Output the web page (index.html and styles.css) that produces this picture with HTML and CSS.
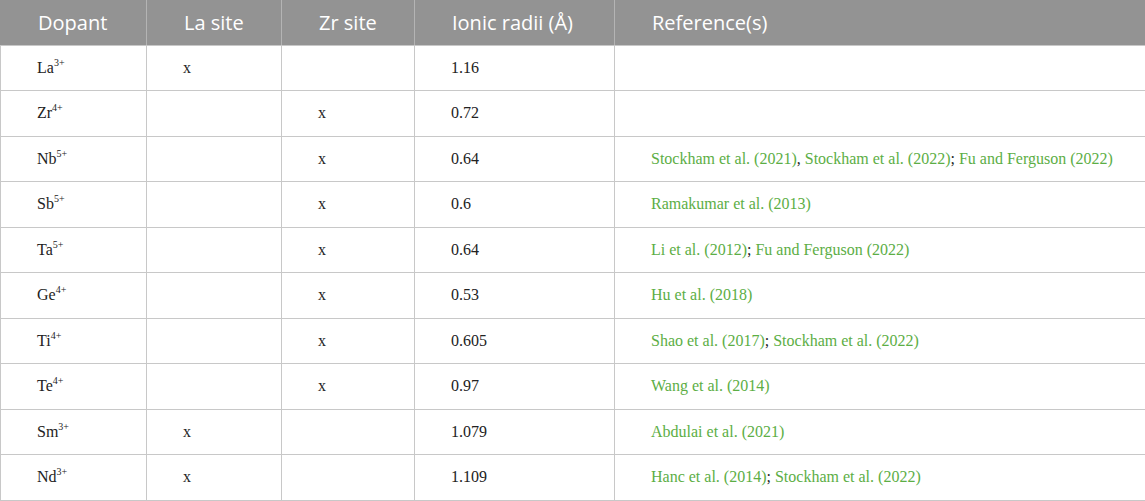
FILE: index.html
```html
<!DOCTYPE html>
<html>
<head>
<meta charset="utf-8">
<link rel="stylesheet" href="styles.css">
</head>
<body>
<table class="tbl">
  <colgroup>
    <col class="c1"><col class="c2"><col class="c3"><col class="c4"><col class="c5">
  </colgroup>
  <thead>
    <tr><th>Dopant</th><th>La site</th><th>Zr site</th><th>Ionic radii (Å)</th><th>Reference(s)</th></tr>
  </thead>
  <tbody>
    <tr><td>La<sup>3+</sup></td><td>x</td><td></td><td>1.16</td><td></td></tr>
    <tr><td>Zr<sup>4+</sup></td><td></td><td>x</td><td>0.72</td><td></td></tr>
    <tr><td>Nb<sup>5+</sup></td><td></td><td>x</td><td>0.64</td><td><span class="ref">Stockham et al. (2021)</span>, <span class="ref">Stockham et al. (2022)</span>; <span class="ref">Fu and Ferguson (2022)</span></td></tr>
    <tr><td>Sb<sup>5+</sup></td><td></td><td>x</td><td>0.6</td><td><span class="ref">Ramakumar et al. (2013)</span></td></tr>
    <tr><td>Ta<sup>5+</sup></td><td></td><td>x</td><td>0.64</td><td><span class="ref">Li et al. (2012)</span>; <span class="ref">Fu and Ferguson (2022)</span></td></tr>
    <tr><td>Ge<sup>4+</sup></td><td></td><td>x</td><td>0.53</td><td><span class="ref">Hu et al. (2018)</span></td></tr>
    <tr><td>Ti<sup>4+</sup></td><td></td><td>x</td><td>0.605</td><td><span class="ref">Shao et al. (2017)</span>; <span class="ref">Stockham et al. (2022)</span></td></tr>
    <tr><td>Te<sup>4+</sup></td><td></td><td>x</td><td>0.97</td><td><span class="ref">Wang et al. (2014)</span></td></tr>
    <tr><td>Sm<sup>3+</sup></td><td>x</td><td></td><td>1.079</td><td><span class="ref">Abdulai et al. (2021)</span></td></tr>
    <tr><td>Nd<sup>3+</sup></td><td>x</td><td></td><td>1.109</td><td><span class="ref">Hanc et al. (2014)</span>; <span class="ref">Stockham et al. (2022)</span></td></tr>
  </tbody>
</table>
</body>
</html>
```

FILE: styles.css
```css
html, body {
  margin: 0;
  padding: 0;
  background: #ffffff;
}
.tbl {
  border-collapse: collapse;
  table-layout: fixed;
  width: 1145px;
}
.c1 { width: 146px; }
.c2 { width: 135px; }
.c3 { width: 133px; }
.c4 { width: 200px; }
.c5 { width: 531px; }
.tbl th {
  background: #939393;
  color: #ffffff;
  font-family: "Open Sans", sans-serif;
  font-weight: 400;
  font-size: 20px;
  text-align: left;
  height: 45px;
  padding: 0 0 0 37px;
  box-sizing: border-box;
  border-left: 1px solid #b4b4b4;
  border-bottom: 1px solid #c8c8c8;
}
.tbl th:first-child { border-left: 1px solid #939393; }
.tbl td {
  font-family: "Liberation Serif", "Times New Roman", serif;
  font-size: 16px;
  color: #222222;
  height: 45.5px;
  padding: 0 0 0 36px;
  box-sizing: border-box;
  border: 1px solid #c8c8c8;
  vertical-align: middle;
  white-space: nowrap;
}
.tbl sup {
  font-size: 10px;
  line-height: 0;
  vertical-align: 7px;
}
.ref {
  color: #5cae45;
}
```
